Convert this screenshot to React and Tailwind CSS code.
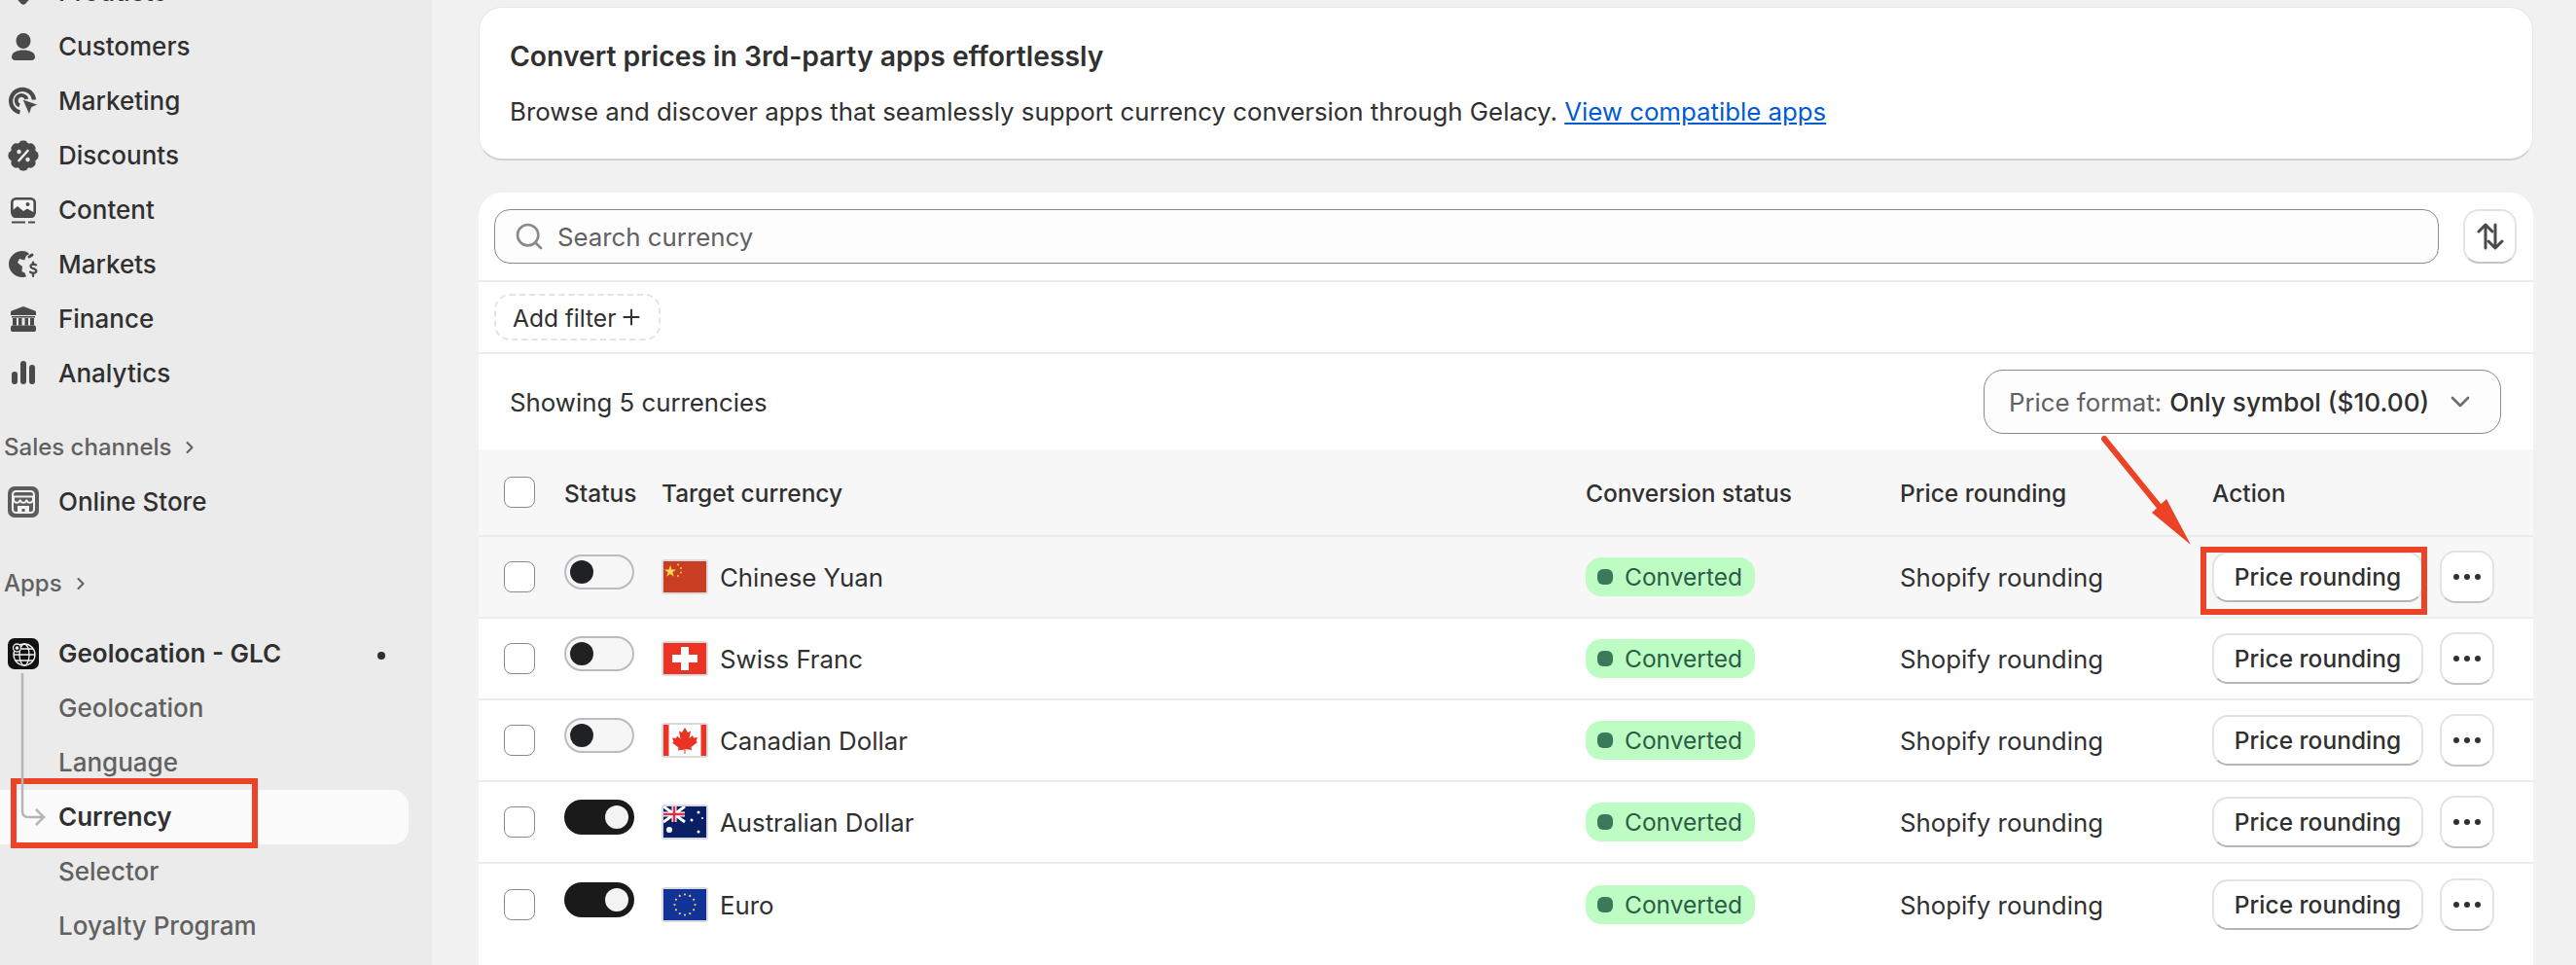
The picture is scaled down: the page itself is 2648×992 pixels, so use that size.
import { ChevronDown, ChevronRight, Plus, Search } from 'lucide-react'

const CURRENCIES = [
  { name: 'Chinese Yuan', flag: 'cn', on: false, hover: true },
  { name: 'Swiss Franc', flag: 'ch', on: false },
  { name: 'Canadian Dollar', flag: 'ca', on: false },
  { name: 'Australian Dollar', flag: 'au', on: true },
  { name: 'Euro', flag: 'eu', on: true },
]

function PersonIcon() {
  return (
    <svg viewBox="0 0 24 28" className="w-6 h-7" fill="#4a4a4a">
      <ellipse cx="12" cy="8" rx="7.500" ry="8" />
      <path d="M0 24.500C0 20 5.500 17.500 12 17.500s12 2.500 12 7c0 2-1.500 3.500-3.500 3.500h-17C1.500 28 0 26.500 0 24.500z" />
    </svg>
  )
}

function MarketingIcon() {
  return (
    <svg viewBox="0 0 30 30" className="w-[30px] h-[30px]" fill="none" stroke="#4a4a4a">
      <path d="M11.500 26.500a12 12 0 1 1 14.500-13" strokeWidth="4.200" />
      <path d="M11 19.500a5.500 5.500 0 1 1 7.500-6.500" strokeWidth="3.800" />
      <path d="M14 13l16 5.500-6.500 3-2.500 7.500z" fill="#4a4a4a" stroke="#ebebeb" strokeWidth=".8" />
    </svg>
  )
}

function DiscountIcon() {
  return (
    <svg viewBox="0 0 32 32" className="w-8 h-8">
      <g fill="#4a4a4a">
        <circle cx="16" cy="16" r="13.500" />
        {[0, 45, 90, 135].map(r => (
          <rect key={r} x="11" y="0.500" width="10" height="31" rx="4.500" transform={`rotate(${r} 16 16)`} />
        ))}
      </g>
      <path d="M20.500 11l-9 10" stroke="#ebebeb" strokeWidth="2.600" strokeLinecap="round" />
      <circle cx="11.500" cy="12" r="2.200" fill="#ebebeb" />
      <circle cx="20.500" cy="20" r="2.200" fill="#ebebeb" />
    </svg>
  )
}

function ContentIcon() {
  return (
    <svg viewBox="0 0 26 27" className="w-[26px] h-[27px]">
      <rect x="1.300" y="1.300" width="23.400" height="18" rx="4" fill="#f4f4f4" stroke="#4a4a4a" strokeWidth="2.600" />
      <path d="M1 14l6-5 6 5 4-2.500 8 4.500v1a4 4 0 0 1-4 4H5a4 4 0 0 1-4-4z" fill="#4a4a4a" />
      <circle cx="17.500" cy="7" r="2" fill="#4a4a4a" />
      <path d="M1 25.500h14M18 25.500h7" stroke="#4a4a4a" strokeWidth="2" />
    </svg>
  )
}

function MarketsIcon() {
  return (
    <svg viewBox="0 0 30 30" className="w-[30px] h-[30px]">
      <path d="M14 1C6.500 1 0 7 0 14.500S6.500 28 14 28c1.500 0 3-.3 4-.8l-1.500-3.700-3-1.500.5-5-5-4 2-4 5 1.500 2-4.500 3-1.800C19.500 2 17 1 14 1z" fill="#4a4a4a" />
      <path d="M21 7l3-2" stroke="#4a4a4a" strokeWidth="3" strokeLinecap="round" />
      <path d="M28 15.500c-1-1.200-5.500-1.500-5.500 1.200 0 3 5.800 1.800 5.800 4.800 0 2.800-5 2.500-6.300 1M25 12.500v2.500M25 24v3" fill="none" stroke="#4a4a4a" strokeWidth="2.200" strokeLinecap="round" />
    </svg>
  )
}

function FinanceIcon() {
  return (
    <svg viewBox="0 0 26 26" className="w-[26px] h-[26px]" fill="#4a4a4a">
      <path d="M13 0L25 4.500c1 .4 1 1.500 1 2.500v2H0V7c0-1 0-2.100 1-2.500z" />
      <path d="M1 10h24v1.500H1z" />
      <rect x="2" y="12" width="4" height="7.500" />
      <rect x="8" y="12" width="3.500" height="7.500" />
      <rect x="14.500" y="12" width="3.500" height="7.500" />
      <rect x="20" y="12" width="4" height="7.500" />
      <rect y="19.500" width="26" height="6.500" rx="2" />
    </svg>
  )
}

function AnalyticsIcon() {
  return (
    <svg viewBox="0 0 24 24" className="w-6 h-6 mt-[-2px]" fill="#4a4a4a">
      <rect x="0" y="11" width="6" height="13" rx="3" />
      <rect x="9" y="0" width="6" height="24" rx="3" />
      <rect x="18" y="4" width="6" height="20" rx="3" />
    </svg>
  )
}

function ProductsIcon() {
  return (
    <svg viewBox="0 0 26 26" className="w-[26px] h-[26px]" fill="#4a4a4a">
      <path d="M3 0h20c2 0 3 1 3 3v10L15 25c-1 1-3 1-4 0L0 13V3c0-2 1-3 3-3z" />
    </svg>
  )
}

function StoreIcon() {
  return (
    <svg viewBox="0 0 32 32" className="w-8 h-8">
      <rect width="32" height="32" rx="7" fill="#5c5c5c" />
      <rect x="5" y="5" width="22" height="22" rx="3.500" fill="none" stroke="#f2f2f2" strokeWidth="2" />
      <path d="M6 10.500h20" stroke="#f2f2f2" strokeWidth="2" />
      <path d="M6 11v2.500a3.300 3.300 0 0 0 6.700 0 3.300 3.300 0 0 0 6.600 0 3.300 3.300 0 0 0 6.700 0V11" fill="none" stroke="#f2f2f2" strokeWidth="2" />
      <path d="M10 20h12v7h-4.500v-4h-3v4H10z" fill="#f2f2f2" />
    </svg>
  )
}

function GlobeAppIcon() {
  return (
    <svg viewBox="0 0 32 32" className="w-8 h-8">
      <rect width="32" height="32" rx="7" fill="#111111" />
      <g fill="none" stroke="#f2f2f2" strokeWidth="1.300">
        <circle cx="17" cy="17" r="11" />
        <ellipse cx="17" cy="17" rx="5" ry="11" />
        <path d="M6 17h22M8 11h18M8 23h18" />
        <circle cx="9.500" cy="10" r="4" fill="#111111" />
        <circle cx="9.500" cy="10" r="1.200" fill="#f2f2f2" />
      </g>
    </svg>
  )
}

function Flag({ code }) {
  return (
    <span className="w-12 h-9 rounded-[3px] bg-[#d8dadd] p-[2px] shrink-0">
      <svg viewBox="0 0 44 32" className="w-11 h-8 block">
        {code === 'cn' && (
          <>
            <rect width="44" height="32" fill="#c93d22" />
            <path d="M7 4l1.500 4.500h4.500l-3.600 2.700 1.300 4.500L7 13l-3.700 2.700 1.300-4.500L1 8.500h4.500z" fill="#f6d94a" />
            <g fill="#f6d94a">
              <circle cx="15" cy="3.500" r="1" />
              <circle cx="18" cy="7" r="1" />
              <circle cx="18" cy="11.500" r="1" />
              <circle cx="15" cy="15" r="1" />
            </g>
          </>
        )}
        {code === 'ch' && (
          <>
            <rect width="44" height="32" fill="#ea3323" />
            <path d="M18 4h8v8h9v8h-9v8h-8v-8H9v-8h9z" fill="#fff" />
          </>
        )}
        {code === 'ca' && (
          <>
            <rect width="44" height="32" fill="#fff" />
            <rect width="5.500" height="32" fill="#ea3323" />
            <rect x="38.500" width="5.500" height="32" fill="#ea3323" />
            <path d="M22 3l3 5 3-1.500-1.500 7.500 3.500-3 1 2.500 4-.5-1.500 4 1.500 1-6.500 5 .5 3-6.500-1V30h-1v-4.500l-6.500 1 .5-3-6.500-5 1.500-1-1.500-4 4 .5 1-2.500 3.500 3L16 6.500 19 8z" fill="#ea3323" />
          </>
        )}
        {code === 'au' && (
          <>
            <rect width="44" height="32" fill="#0a1f66" />
            <path d="M0 0l22 16M22 0L0 16" stroke="#fff" strokeWidth="3" />
            <path d="M11 0v16M0 8h22" stroke="#fff" strokeWidth="5" />
            <path d="M11 0v16M0 8h22" stroke="#d9344a" strokeWidth="2.600" />
            <g fill="#fff">
              <circle cx="6" cy="24" r="3" />
              <circle cx="36" cy="6" r="1.500" />
              <circle cx="29" cy="14" r="1.500" />
              <circle cx="40" cy="12" r="1" />
              <circle cx="36" cy="26" r="1.500" />
            </g>
          </>
        )}
        {code === 'eu' && (
          <>
            <rect width="44" height="32" fill="#123499" />
            <g fill="#f6d94a">
              {[...Array(12)].map((_, i) => (
                <circle
                  key={i}
                  cx={22 + 10.500 * Math.sin((i * Math.PI) / 6)}
                  cy={16 - 10.500 * Math.cos((i * Math.PI) / 6)}
                  r="1.100"
                />
              ))}
            </g>
          </>
        )}
      </svg>
    </span>
  )
}

function Toggle({ on }) {
  if (on) {
    return (
      <span className="w-[72px] h-9 rounded-full bg-[#1a1a1a] mb-[10px] flex items-center justify-end pr-[6px]">
        <span className="w-6 h-6 rounded-full bg-[#f3f3f3]" />
      </span>
    )
  }
  return (
    <span className="w-[72px] h-9 rounded-full bg-[#f6f6f6] border-2 border-[#b9bcc0] mb-[10px] flex items-center pl-1">
      <span className="w-6 h-6 rounded-full bg-[#202123]" />
    </span>
  )
}

function Checkbox() {
  return <span className="block w-8 h-8 rounded-[8px] border border-[#8a8a8a] bg-white" />
}

function NavItem({ icon, label, className = 'font-medium' }) {
  return (
    <div className="h-14 flex items-center">
      <span className="w-[48px] flex justify-center shrink-0">{icon}</span>
      <span className={`ml-[12px] text-[#303030] text-[26px] ${className}`}>{label}</span>
    </div>
  )
}

function SubItem({ label }) {
  return <div className="h-14 flex items-center pl-[60px] text-[26px] font-medium text-[#616161]">{label}</div>
}

function SectionLabel({ label, className }) {
  return (
    <div className={`h-14 flex items-center pl-1 text-[24px] font-medium text-[#616161] ${className}`}>
      {label}
      <ChevronRight className="w-[20px] h-[20px] ml-[9px]" strokeWidth={2.500} />
    </div>
  )
}

function Sidebar() {
  return (
    <aside className="w-[444px] shrink-0 bg-[#ebebeb] mt-[-36px]">
      <NavItem icon={<ProductsIcon />} label="Products" />
      <NavItem icon={<PersonIcon />} label="Customers" />
      <NavItem icon={<MarketingIcon />} label="Marketing" />
      <NavItem icon={<DiscountIcon />} label="Discounts" />
      <NavItem icon={<ContentIcon />} label="Content" />
      <NavItem icon={<MarketsIcon />} label="Markets" />
      <NavItem icon={<FinanceIcon />} label="Finance" />
      <NavItem icon={<AnalyticsIcon />} label="Analytics" />

      <SectionLabel label="Sales channels" className="mt-[20px]" />
      <NavItem icon={<StoreIcon />} label="Online Store" />

      <SectionLabel label="Apps" className="mt-[28px]" />
      <div className="relative mt-[16px]">
        <svg className="absolute left-[20px] top-[48px] z-10" width="30" height="160" fill="none" stroke="#b5b5b5" strokeWidth="2.500">
          <path d="M3 0v142c0 4 2 6 6 6h16" />
          <path d="M17 140l8 8-8 8" />
        </svg>
        <NavItem icon={<GlobeAppIcon />} label={
          <span className="flex items-center w-[336px]">
            Geolocation - GLC
            <span className="w-2 h-2 rounded-full bg-[#303030] ml-auto mt-1" />
          </span>
        } className="font-semibold" />
        <SubItem label="Geolocation" />
        <SubItem label="Language" />
        <div className="relative h-14 w-[420px] rounded-r-[16px] bg-[#fafafa] flex items-center pl-[60px] text-[26px] font-semibold text-[#303030]">
          Currency
          <span className="absolute left-[11px] top-[-12px] w-[254px] h-[72px] border-[6px] border-[#ec4226]" />
        </div>
        <SubItem label="Selector" />
        <SubItem label="Loyalty Program" />
      </div>
    </aside>
  )
}

function CurrencyRow({ row, index, last }) {
  return (
    <div className={`flex items-center h-[84px] pl-[26px] ${last ? '' : 'border-b-2 border-[#ebebeb]'} ${row.hover ? 'bg-[#f7f7f7]' : ''}`}>
      <span className="w-[62px] shrink-0"><Checkbox /></span>
      <span className="w-[100px] shrink-0 flex"><Toggle on={row.on} /></span>
      <span className="w-[950px] shrink-0 flex items-center">
        <Flag code={row.flag} />
        <span className="ml-3 pt-[2px] text-[#303030]">{row.name}</span>
      </span>
      <span className="w-[323px] shrink-0">
        <span className="inline-flex items-center w-[174px] h-10 rounded-[16px] bg-[#bdfcc3] pl-3 text-[24.500px] text-[#2c5c44]">
          <span className="w-4 h-4 rounded-[6px] bg-[#3a7a5b] mr-[12px]" />
          <span className="pt-[1px]">Converted</span>
        </span>
      </span>
      <span className="w-[321px] shrink-0 pt-[2px] text-[#303030]">Shopify rounding</span>
      <span className="relative w-[217px] h-[52px] shrink-0 rounded-[16px] bg-white border-2 border-[#e3e3e3] border-b-[#b5b5b5] flex items-center justify-center text-[24.500px] font-medium text-[#303030]">
        Price rounding
        {index === 0 && (
          <span className="absolute left-[-14px] top-[-7px] w-[233px] h-[70px] border-[6px] border-[#ec4226]" />
        )}
      </span>
      <span className="w-[56px] h-[54px] ml-[17px] shrink-0 rounded-[16px] bg-white border-2 border-[#e3e3e3] border-b-[#c4c4c4] flex items-center justify-center gap-[5px]">
        <i className="w-[6px] h-[6px] rounded-full bg-[#303030]" />
        <i className="w-[6px] h-[6px] rounded-full bg-[#303030]" />
        <i className="w-[6px] h-[6px] rounded-full bg-[#303030]" />
      </span>
    </div>
  )
}

export default function App() {
  return (
    <div
      className="relative flex w-[2648px] h-[992px] overflow-hidden bg-[#f1f1f1] text-[25.800px] leading-none text-[#303030]"
      style={{ fontFamily: 'Inter, "Liberation Sans", sans-serif' }}
    >
      <Sidebar />
      <main className="w-[2112px] ml-[48px] pt-[7px] shrink-0">
        {/* Info banner */}
        <section className="h-[158px] rounded-[24px] bg-white border border-[#e6e6e6] border-b-2 border-b-[#d0d0d0] pl-[31px] pt-[36px]">
          <h2 className="text-[28.300px] font-semibold leading-[28px] text-[#303030]">Convert prices in 3rd-party apps effortlessly</h2>
          <p className="mt-[30px]">
            Browse and discover apps that seamlessly support currency conversion through Gelacy.{' '}
            <span className="text-[#005bd3] underline">View compatible apps</span>
          </p>
        </section>

        {/* Currency table */}
        <section className="mt-[33px] rounded-t-[24px] bg-white h-[900px] overflow-hidden">
          <div className="h-[92px] flex items-center pl-4 pr-[17px] border-b-2 border-[#ebebeb]">
            <div className="w-[1999px] h-[56px] rounded-[16px] border border-[#8a8a8a] bg-[#fdfdfd] flex items-center pl-[19px] text-[#616161]">
              <Search className="w-[32px] h-[32px] text-[#8a8a8a]" strokeWidth={2} />
              <span className="ml-[13px] pt-[2px]">Search currency</span>
            </div>
            <div className="w-[55px] h-[56px] ml-[25px] rounded-[16px] bg-white border-2 border-[#e3e3e3] border-b-[#c4c4c4] flex items-center justify-center">
              <svg viewBox="0 0 28 30" className="w-7 h-[30px]" fill="none" stroke="#4a4a4a" strokeWidth="3" strokeLinecap="round" strokeLinejoin="round">
                <path d="M9 27V3M2 10l7-7 7 7" />
                <path d="M19 3v24M12 20l7 7 7-7" />
              </svg>
            </div>
          </div>
          <div className="h-[74px] flex items-center pl-4 border-b-2 border-[#ebebeb]">
            <div className="w-[171px] h-[48px] rounded-[16px] border-2 border-dashed border-[#e3e3e3] flex items-center pl-[17px] text-[24.500px] text-[#303030]">
              <span className="pt-[2px]">Add filter</span>
              <Plus className="w-[26px] h-[26px] ml-[3px]" strokeWidth={1.800} />
            </div>
          </div>
          <div className="h-[98px] flex items-center justify-between pl-[32px] pr-[33px]">
            <span className="pt-[2px]">Showing 5 currencies</span>
            <div className="w-[532px] h-[66px] rounded-[20px] border border-[#8a8a8a] bg-[#fdfdfd] flex items-center pl-[25px]">
              <span className="pt-[2px] text-[#616161]">Price format:</span>
              <span className="ml-2 pt-[2px] font-medium text-[#303030] text-[26.200px]">Only symbol ($10.00)</span>
              <ChevronDown className="w-8 h-8 ml-[16px] text-[#6e6e6e]" strokeWidth={2} />
            </div>
          </div>
          <div className="h-[90px] flex items-center pl-[26px] bg-[#f7f7f7] border-b-2 border-[#ebebeb] font-medium text-[24.500px]">
            <span className="w-[62px] shrink-0"><Checkbox /></span>
            <span className="w-[100px] shrink-0 pt-[2px]">Status</span>
            <span className="w-[950px] shrink-0 pt-[2px]">Target currency</span>
            <span className="w-[323px] shrink-0 pt-[2px]">Conversion status</span>
            <span className="w-[321px] shrink-0 pt-[2px]">Price rounding</span>
            <span className="pt-[2px]">Action</span>
          </div>
          {CURRENCIES.map((row, i) => <CurrencyRow key={row.name} row={row} index={i} last={i === CURRENCIES.length - 1} />)}
        </section>
      </main>

      {/* annotation arrow */}
      <svg className="absolute left-0 top-0 pointer-events-none" width="2648" height="992">
        <path d="M2163 451L2219 520" stroke="#ec4226" strokeWidth="6" strokeLinecap="round" />
        <path d="M2252 560L2212 527L2227 513z" fill="#ec4226" />
      </svg>
    </div>
  )
}
